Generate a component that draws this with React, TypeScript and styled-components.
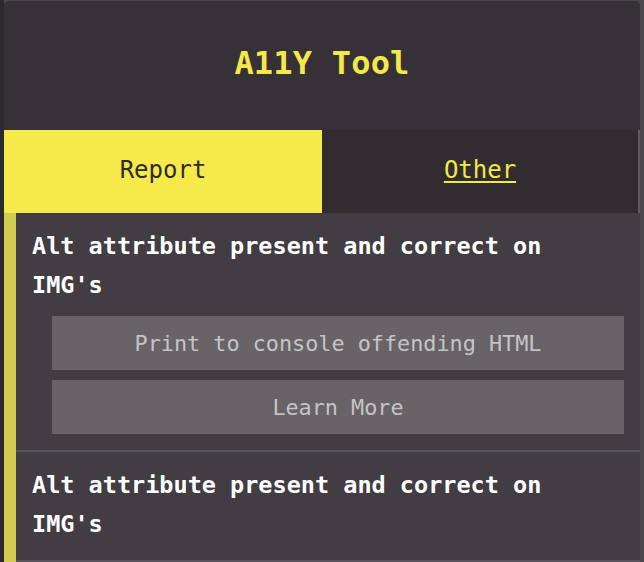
import React, { useState } from 'react';
import styled, { createGlobalStyle } from 'styled-components';

const GlobalStyle = createGlobalStyle`
  html, body {
    margin: 0;
    padding: 0;
    background: #4a474b;
    overflow: hidden;
  }
  body {
    font-family: 'DejaVu Sans Mono', 'Liberation Mono', monospace;
  }
`;

const Page = styled.div`
  height: 562px;
  padding: 1px 4px 0 4px;
  background: linear-gradient(to right, #2c2a2d 0, #2c2a2d 4px, #4a474b 4px);
  box-sizing: border-box;
`;

const Popup = styled.div`
  width: 636px;
  height: 561px;
  display: flex;
  flex-direction: column;
  background: #413d42;
  border-radius: 5px 5px 0 0;
  overflow: hidden;
`;

const Header = styled.header`
  height: 129px;
  flex-shrink: 0;
  display: flex;
  align-items: center;
  justify-content: center;
  padding-bottom: 6px;
  box-sizing: border-box;
  background: #353136;
`;

const Title = styled.h1`
  margin: 0;
  color: #f5e84a;
  font-size: 32px;
  font-weight: bold;
  letter-spacing: 0.2px;
`;

const Tabs = styled.nav`
  display: grid;
  grid-template-columns: 318px 1fr;
  height: 83px;
  flex-shrink: 0;
  background: #302c30;
  border-right: 2px solid #5e5b5f;
`;

const Tab = styled.a<{ $active?: boolean }>`
  display: flex;
  align-items: center;
  justify-content: center;
  padding-bottom: 4px;
  font-size: 24px;
  background: ${p => (p.$active ? '#f5ea4a' : 'transparent')};
  color: ${p => (p.$active ? '#2f2b2f' : '#f5e84a')};
  text-decoration: ${p => (p.$active ? 'none' : 'underline')};
  text-underline-offset: 3px;
  cursor: pointer;
`;

const Report = styled.section`
  flex: 1;
  border-left: 12px solid #d1cc50;
  background: #413d42;
`;

const Check = styled.div`
  padding: 14px 16px 16px 16px;
  border-bottom: 2px solid #58555a;
`;

const CheckTitle = styled.p`
  margin: 0;
  color: #ffffff;
  font-size: 23.5px;
  font-weight: bold;
  line-height: 39px;
`;

const Actions = styled.div`
  display: flex;
  flex-direction: column;
  gap: 10px;
  margin: 11px 0 0 20px;
`;

const ActionButton = styled.button`
  height: 54px;
  border: none;
  background: #676367;
  color: #c6c3c6;
  font-family: inherit;
  font-size: 21.8px;
  cursor: pointer;
`;

const checks = [
  { title: "Alt attribute present and correct on IMG's", open: true },
  { title: "Alt attribute present and correct on IMG's", open: false },
];

export default function App() {
  const [tab, setTab] = useState('report');

  return (
    <Page>
      <GlobalStyle />
      <Popup>
        <Header>
          <Title>A11Y Tool</Title>
        </Header>
        <Tabs>
          <Tab $active={tab === 'report'} onClick={() => setTab('report')}>Report</Tab>
          <Tab $active={tab === 'other'} onClick={() => setTab('other')}>Other</Tab>
        </Tabs>
        <Report>
          {checks.map((c, i) => (
            <Check key={i}>
              <CheckTitle>{c.title}</CheckTitle>
              {c.open && (
                <Actions>
                  <ActionButton>Print to console offending HTML</ActionButton>
                  <ActionButton>Learn More</ActionButton>
                </Actions>
              )}
            </Check>
          ))}
        </Report>
      </Popup>
    </Page>
  );
}
